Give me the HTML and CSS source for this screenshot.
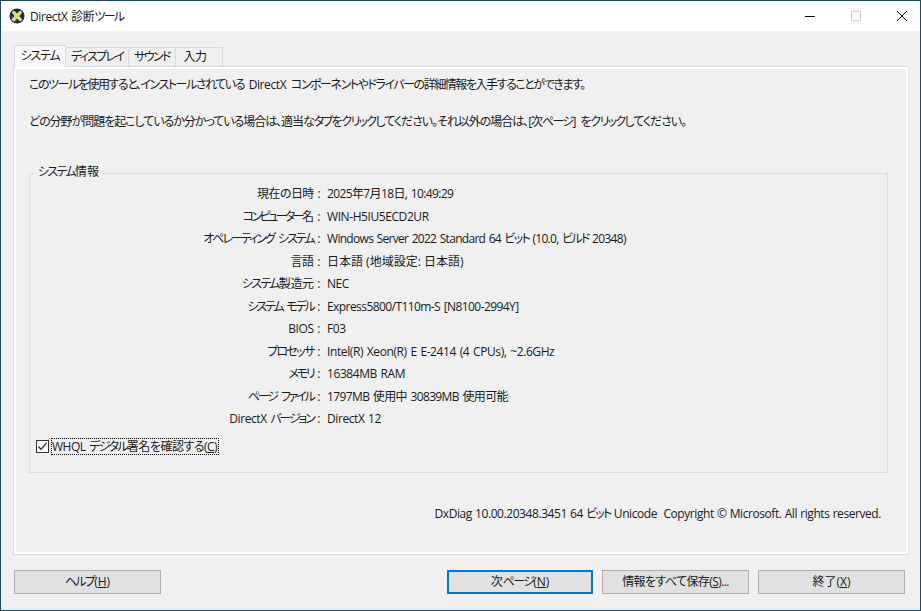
FILE: index.html
```html
<!DOCTYPE html>
<html lang="ja">
<head>
    <meta charset="UTF-8">
    <title>DirectX 診断ツール</title>
    <link rel="stylesheet" href="styles.css">
</head>
<body>
<div class="window">
    <!-- Title bar -->
    <div class="titlebar">
        <svg class="app-icon" width="16" height="16" viewBox="0 0 16 16">
            <circle cx="8" cy="8" r="7.5" fill="#24245a"/>
            <circle cx="5" cy="11" r="3" fill="#6a6ab0" opacity="0.6"/>
            <path d="M4.8 4.6 L11.2 11.4 M11.2 4.6 L4.8 11.4" stroke="#e2e06a" stroke-width="3.4" stroke-linecap="round"/>
        </svg>
        <span class="title">DirectX 診断<span class="k">ツール</span></span>
        <div class="caption-buttons">
            <svg width="12" height="12" viewBox="0 0 12 12"><path d="M1 6.5 H11" stroke="#000"/></svg>
            <svg width="12" height="12" viewBox="0 0 12 12"><rect x="1.5" y="1.5" width="9" height="9" fill="none" stroke="#ccc"/></svg>
            <svg width="12" height="12" viewBox="0 0 12 12"><path d="M1 1 L11 11 M11 1 L1 11" stroke="#000"/></svg>
        </div>
    </div>

    <div class="body">
        <!-- Tabs -->
        <div class="tabs">
            <div class="tab tab-active">システム</div>
            <div class="tab tab-w63">ディスプレイ</div>
            <div class="tab tab-w47">サウンド</div>
            <div class="tab tab-w47 tab-last">入力</div>
        </div>

        <div class="panel">
            <p class="intro intro-first">このツールを使用すると、インストールされている <span class="latin">DirectX</span> コンポーネントやドライバーの詳細情報を入手することができます。</p>
            <p class="intro intro-second">どの分野が問題を起こしているか分かっている場合は、適当な<span class="k">タブ</span>を<span class="k">クリック</span>してください。それ以外の場合は、[次<span class="k">ページ</span>] を<span class="k">クリック</span>してください。</p>

            <!-- System info group -->
            <div class="group">
                <div class="group-title"><span class="k">システム</span>情報</div>
                <div class="info-grid">
                    <div class="label label-tight">現在の日時 :</div><div class="date">2025年7月18日, 10:49:29</div>
                    <div class="label"><span class="kkk">コンピューター</span>名 :</div><div>WIN-H5IU5ECD2UR</div>
                    <div class="label"><span class="k2">オペレーティング システム</span> :</div><div class="row-os">Windows Server 2022 Standard 64 <span class="k">ビット</span> (10.0, <span class="k">ビルド</span> 20348)</div>
                    <div class="label">言語 :</div><div class="cjk">日本語 (地域設定: 日本語)</div>
                    <div class="label"><span class="k">システム</span>製造元 :</div><div>NEC</div>
                    <div class="label"><span class="kk">システム モデル</span> :</div><div class="tighter">Express5800/T110m-S [N8100-2994Y]</div>
                    <div class="label">BIOS :</div><div>F03</div>
                    <div class="label"><span class="k">プロセッサ</span> :</div><div class="looser">Intel(R) Xeon(R) E E-2414 (4 CPUs), ~2.6GHz</div>
                    <div class="label"><span class="kk">メモリ</span> :</div><div>16384MB RAM</div>
                    <div class="label"><span class="kk">ページ ファイル</span> :</div><div class="date">1797MB 使用中 30839MB 使用可能</div>
                    <div class="label">DirectX <span class="kk">バージョン</span> :</div><div>DirectX 12</div>
                </div>
                <div class="check-row">
                    <svg class="checkbox" width="13" height="13" viewBox="0 0 13 13">
                        <rect x="0.5" y="0.5" width="12" height="12" fill="#fff" stroke="#333"/>
                        <path d="M2.5 6.5 L5 9.5 L10.5 3" fill="none" stroke="#333" stroke-width="1.2"/>
                    </svg>
                    <span class="check-label">WHQL <span class="k">デジタル</span>署名を確認する(<u>C</u>)</span>
                </div>
            </div>

            <div class="copyright">DxDiag 10.00.20348.3451 64 <span class="k">ビット</span> Unicode&nbsp; Copyright © Microsoft. All rights reserved.</div>
        </div>

        <!-- Bottom buttons -->
        <div class="buttons">
            <div class="btn"><span class="k">ヘルプ</span>(<u>H</u>)</div>
            <div class="btn-right">
                <div class="btn btn-default">次<span class="k">ページ</span>(<u>N</u>)</div>
                <div class="btn btn-tight">情報をすべて保存(<u>S</u>)...</div>
                <div class="btn">終了(<u>X</u>)</div>
            </div>
        </div>
    </div>
</div>
</body>
</html>
```

FILE: styles.css
```css
/* General page */
html, body {
    margin: 0;
    height: 100%;
    overflow: hidden;
}

body {
    font-family: "Open Sans", "Noto Sans CJK JP", sans-serif;
    font-size: 12px;
    color: #1a1a1a;
    font-feature-settings: "palt";
    word-spacing: 1px;
}

/* Katakana in the original font is much narrower than Noto's */
.k { letter-spacing: -1.7px; word-spacing: 3px; }
.k2 { letter-spacing: -2px; word-spacing: 3px; }
.kk { letter-spacing: -2.2px; word-spacing: 3px; }
.kkk { letter-spacing: -2.6px; }
.latin { letter-spacing: -0.4px; }

.window {
    width: 921px;
    height: 611px;
    box-sizing: border-box;
    border: 1px solid #1f4a5e;
    display: flex;
    flex-direction: column;
    background: #f0f0f0;
}

/* Title bar */
.titlebar {
    height: 30px;
    background: #fff;
    display: flex;
    align-items: center;
    padding-left: 8px;
    flex-shrink: 0;
}

.title {
    margin-left: 5px;
    letter-spacing: -0.4px;
}

.caption-buttons {
    margin-left: auto;
    display: flex;
    gap: 34px;
    padding-right: 12px;
}

/* Tabs */
.body {
    padding: 13px 12px 0 12px;
    display: flex;
    flex-direction: column;
    flex: 1;
}

.tabs {
    display: flex;
    height: 22px;
    align-items: flex-end;
    position: relative;
    z-index: 2;
    margin-left: 1px;
}

.tab {
    height: 19px;
    box-sizing: border-box;
    border: 1px solid #d9d9d9;
    border-bottom: none;
    border-left: none;
    background: #f0f0f0;
    text-align: center;
    line-height: 17px;
    white-space: nowrap;
    letter-spacing: -1.7px;
}

.tab-active {
    width: 52px;
    height: 22px;
    background: #f9f9f9;
    border-left: 1px solid #d9d9d9;
    line-height: 20px;
    margin-bottom: -1px;
    letter-spacing: -1.2px;
}

.tab-w63 { width: 63px; }
.tab-w47 { width: 47px; }
.tab-last { padding-right: 8px; letter-spacing: -0.5px; }

/* Panel */
.panel {
    width: 896px;
    height: 489px;
    box-sizing: border-box;
    border: 1px solid #d9d9d9;
    border-right-color: #e4e4e4;
    outline: 2px solid #fff;
    outline-offset: -3px;
    padding: 9px 20px 0 15px;
    position: relative;
    display: flex;
    flex-direction: column;
}

.intro {
    margin: 0;
    height: 18px;
    line-height: 18px;
    white-space: nowrap;
    word-spacing: 3px;
}

.intro-first {
    letter-spacing: -1.45px;
}

.intro-second {
    margin-top: 19px;
    letter-spacing: -1.04px;
}

/* Group box */
.group {
    margin-top: 42px;
    height: 300px;
    box-sizing: border-box;
    border: 1px solid #dcdcdc;
    position: relative;
    padding-top: 9px;
}

.group-title {
    position: absolute;
    top: -11px;
    left: 4px;
    padding: 0 4px;
    background: #f0f0f0;
    line-height: 18px;
}

.info-grid {
    display: grid;
    grid-template-columns: 290px 1fr;
    column-gap: 7px;
    grid-auto-rows: 22.5px;
    line-height: 22.5px;
    white-space: nowrap;
    letter-spacing: -0.42px;
}

.label {
    text-align: right;
}

.label-tight { letter-spacing: -0.55px; }
.date { letter-spacing: -0.62px; }
.cjk { letter-spacing: 0; word-spacing: 0; }
.tighter { letter-spacing: -0.57px; }
.row-os { letter-spacing: -0.7px; }
.looser { letter-spacing: -0.4px; }

.check-row {
    display: flex;
    align-items: center;
    margin: 8px 0 0 6px;
}

.check-label {
    margin-left: 3px;
    outline: 1px dotted #000;
    line-height: 15px;
    padding-right: 1px;
    white-space: nowrap;
    letter-spacing: -0.5px;
}

.copyright {
    margin-top: 32px;
    text-align: right;
    padding-right: 7px;
    line-height: 18px;
    white-space: nowrap;
    letter-spacing: -0.43px;
    word-spacing: 0.5px;
}

/* Buttons */
.buttons {
    display: flex;
    justify-content: space-between;
    margin: 15px 3px 0 0;
    padding-left: 1px;
}

.btn-right {
    display: flex;
    gap: 9px;
}

.btn {
    width: 147px;
    height: 24px;
    box-sizing: border-box;
    background: #e1e1e1;
    border: 1px solid #adadad;
    text-align: center;
    line-height: 22px;
}

.btn-default {
    width: 146px;
    border: 2px solid #0078d7;
    line-height: 20px;
}

.btn-tight {
    letter-spacing: -0.6px;
}
```
